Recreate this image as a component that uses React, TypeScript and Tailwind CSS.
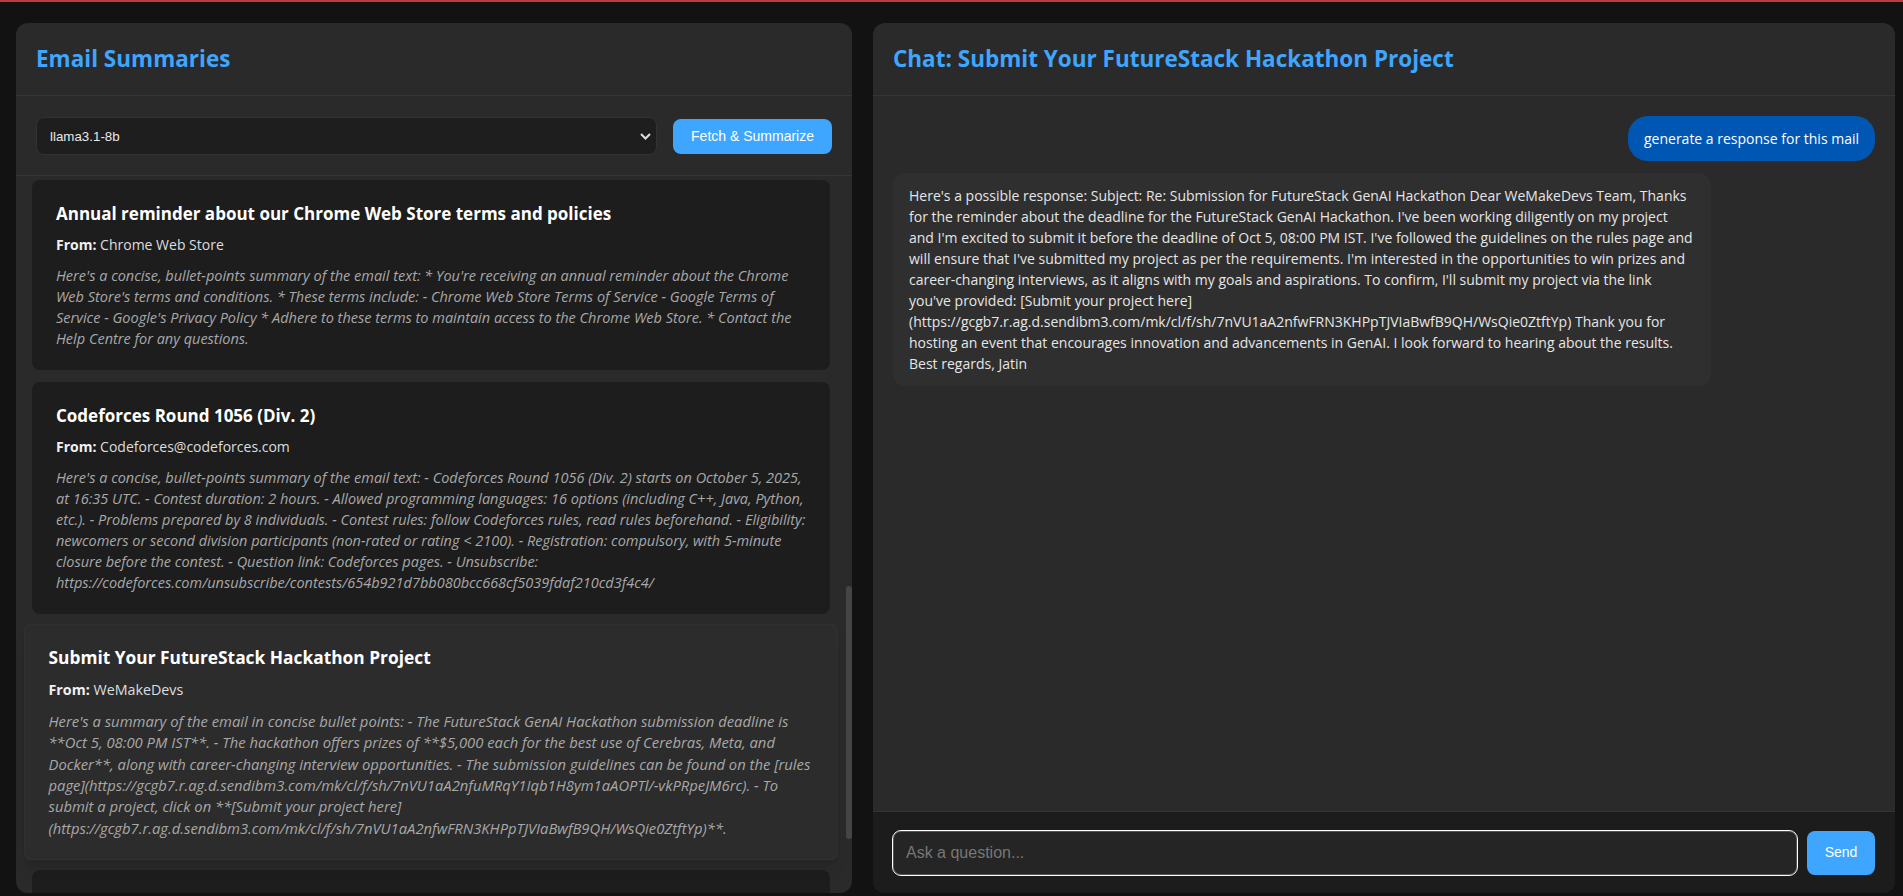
import { useLayoutEffect, useRef, useState } from 'react';

interface Email {
    id: number;
    subject: string;
    from: string;
    summary: string;
}

interface Message {
    role: 'user' | 'assistant';
    text: string;
}

const emails: Email[] = [
    {
        id: 1,
        subject: 'Your weekly GitHub digest',
        from: 'GitHub',
        summary:
            "Here's a concise, bullet-points summary of the email text: - 3 repositories you follow published new releases this week. - Your pull request on react-router received 2 reviews. - New security advisories were published for 1 of your dependencies. - Manage notification settings from your account page. - Trending repositories in TypeScript and Python are listed at the end of the digest, along with suggested discussions you might want to join.",
    },
    {
        id: 2,
        subject: 'LeetCode Weekly Contest 469',
        from: 'LeetCode',
        summary:
            "Here's a concise, bullet-points summary of the email text: - Weekly Contest 469 starts on Sunday at 8:00 AM IST. - Contest duration: 90 minutes, 4 problems. - Top 500 participants earn LeetCoins. - Register before the contest begins to be eligible for rankings.",
    },
    {
        id: 3,
        subject: 'Security alert for your linked Google Account',
        from: 'Google',
        summary:
            "Here's a concise, bullet-points summary of the email text: * A new sign-in was detected on a Windows device. * If this was you, no action is needed. * If not, review your account activity and change your password.",
    },
    {
        id: 4,
        subject: 'Your application has been shortlisted',
        from: 'Internshala',
        summary:
            "Here's a concise, bullet-points summary of the email text: - Your application for the Frontend Developer internship has been shortlisted. - The company will contact you for the next round within 3 working days. - Keep your profile and resume updated. - Check the dashboard for assignment details and deadlines.",
    },
    {
        id: 5,
        subject: 'Welcome to the Google Developer Program',
        from: 'Google Developers',
        summary:
            "Here's a concise, bullet-points summary of the email text: - Your Google Developer Program profile is now active. - Earn badges by completing codelabs and attending events. - Explore new learning pathways for Android, Firebase and Gemini. - Join a local Google Developer Group to connect with other developers.",
    },
    {
        id: 10,
        subject: 'Your Cerebras API key is ready',
        from: 'Cerebras',
        summary:
            "Here's a concise, bullet-points summary of the email text: - Your Cerebras Inference API key has been generated and is available in the developer console. - The free tier includes access to llama3.1-8b, llama-3.3-70b and qwen-3-32b models. - Rate limits: 30 requests per minute and 60,000 tokens per minute on the free tier. - The API is compatible with the OpenAI client libraries, so existing code only needs a new base URL. - Keep your key secret and rotate it from the console if it is exposed. - Read the quickstart guide for examples in Python and Node.js. - Join the community Discord for support and announcements.",
    },
    {
        id: 6,
        subject: 'Annual reminder about our Chrome Web Store terms and policies',
        from: 'Chrome Web Store',
        summary:
            "Here's a concise, bullet-points summary of the email text: * You're receiving an annual reminder about the Chrome Web Store's terms and conditions. * These terms include: - Chrome Web Store Terms of Service - Google Terms of Service - Google's Privacy Policy * Adhere to these terms to maintain access to the Chrome Web Store. * Contact the Help Centre for any questions.",
    },
    {
        id: 7,
        subject: 'Codeforces Round 1056 (Div. 2)',
        from: 'Codeforces@codeforces.com',
        summary:
            "Here's a concise, bullet-points summary of the email text: - Codeforces Round 1056 (Div. 2) starts on October 5, 2025, at 16:35 UTC. - Contest duration: 2 hours. - Allowed programming languages: 16 options (including C++, Java, Python, etc.). - Problems prepared by 8 individuals. - Contest rules: follow Codeforces rules, read rules beforehand. - Eligibility: newcomers or second division participants (non-rated or rating < 2100). - Registration: compulsory, with 5-minute closure before the contest. - Question link: Codeforces pages. - Unsubscribe: https://codeforces.com/unsubscribe/contests/654b921d7bb080bcc668cf5039fdaf210cd3f4c4/",
    },
    {
        id: 8,
        subject: 'Submit Your FutureStack Hackathon Project',
        from: 'WeMakeDevs',
        summary:
            "Here's a summary of the email in concise bullet points: - The FutureStack GenAI Hackathon submission deadline is **Oct 5, 08:00 PM IST**. - The hackathon offers prizes of **$5,000 each for the best use of Cerebras, Meta, and Docker**, along with career-changing interview opportunities. - The submission guidelines can be found on the [rules page](https://gcgb7.r.ag.d.sendibm3.com/mk/cl/f/sh/7nVU1aA2nfuMRqY1Iqb1H8ym1aAOPTl/-vkPRpeJM6rc). - To submit a project, click on **[Submit your project here](https://gcgb7.r.ag.d.sendibm3.com/mk/cl/f/sh/7nVU1aA2nfwFRN3KHPpTJVIaBwfB9QH/WsQie0ZtftYp)**.",
    },
    {
        id: 9,
        subject: 'Your October statement is ready',
        from: 'HDFC Bank',
        summary:
            "Here's a concise, bullet-points summary of the email text: - Your credit card statement for October is now available. - Pay before the due date to avoid late charges.",
    },
];

const messages: Message[] = [
    { role: 'user', text: 'generate a response for this mail' },
    {
        role: 'assistant',
        text: "Here's a possible response: Subject: Re: Submission for FutureStack GenAI Hackathon Dear WeMakeDevs Team, Thanks for the reminder about the deadline for the FutureStack GenAI Hackathon. I've been working diligently on my project and I'm excited to submit it before the deadline of Oct 5, 08:00 PM IST. I've followed the guidelines on the rules page and will ensure that I've submitted my project as per the requirements. I'm interested in the opportunities to win prizes and career-changing interviews, as it aligns with my goals and aspirations. To confirm, I'll submit my project via the link you've provided: [Submit your project here](https://gcgb7.r.ag.d.sendibm3.com/mk/cl/f/sh/7nVU1aA2nfwFRN3KHPpTJVIaBwfB9QH/WsQie0ZtftYp) Thank you for hosting an event that encourages innovation and advancements in GenAI. I look forward to hearing about the results. Best regards, Jatin",
    },
];

export default function App() {
    const [model, setModel] = useState('llama3.1-8b');
    const [selectedId, setSelectedId] = useState(8);
    const [question, setQuestion] = useState('');
    const [thumb, setThumb] = useState({ top: 0, height: 0 });
    const listRef = useRef<HTMLDivElement>(null);
    const firstVisibleRef = useRef<HTMLDivElement>(null);

    const updateThumb = () => {
        const el = listRef.current;
        if (!el) return;
        const h = el.clientHeight;
        const total = el.scrollHeight;
        setThumb({ top: (el.scrollTop / total) * h, height: (h * h) / total });
    };

    // list is scrolled down to the Chrome Web Store mail
    useLayoutEffect(() => {
        if (listRef.current && firstVisibleRef.current) {
            listRef.current.scrollTop = firstVisibleRef.current.offsetTop - 4;
        }
        updateThumb();
    }, []);

    const selected = emails.find((e) => e.id === selectedId);

    return (
        <div className="h-[896px] overflow-hidden bg-[#121212] font-['Open_Sans',sans-serif] text-[14px] leading-[21px] text-[#e0e0e0]">
            <div className="h-[2px] bg-[#c23a3c]" />

            <div className="flex gap-[21px] pl-4 pt-[21px]">
                {/* left: summaries */}
                <section className="flex h-[870px] w-[836px] flex-col overflow-hidden rounded-xl bg-[#2a2a2a]">
                    <header className="border-b border-[#363636] px-5 py-5">
                        <h1 className="text-[22.5px] font-bold leading-8 text-[#3ea6ff]">Email Summaries</h1>
                    </header>

                    <div className="flex items-center gap-4 border-b border-[#363636] px-5 pb-5 pt-[21px]">
                        <div className="relative flex-1">
                            <select
                                value={model}
                                onChange={(e) => setModel(e.target.value)}
                                className="h-[38px] w-full appearance-none rounded-lg border border-[#333] bg-[#1e1e1e] pl-[13px] font-['Liberation_Sans',Arial,sans-serif] text-[13.33px] text-[#e8e8e8] outline-none"
                            >
                                <option value="llama3.1-8b">llama3.1-8b</option>
                                <option value="llama-3.3-70b">llama-3.3-70b</option>
                                <option value="qwen-3-32b">qwen-3-32b</option>
                            </select>
                            <svg
                                className="pointer-events-none absolute right-[6px] top-[16px] h-[7px] w-[11px] text-[#e0e0e0]"
                                viewBox="0 0 11 7"
                                fill="none"
                                stroke="currentColor"
                                strokeWidth="2"
                            >
                                <path d="M1 1l4.5 4.5L10 1" />
                            </svg>
                        </div>
                        <button className="h-[35px] cursor-pointer rounded-lg bg-[#3ea6ff] px-[18px] font-['Liberation_Sans',Arial,sans-serif] text-[14px] text-white">
                            Fetch &amp; Summarize
                        </button>
                    </div>

                    <div className="relative min-h-0 flex-1">
                        <div
                            ref={listRef}
                            onScroll={updateThumb}
                            className="relative h-full overflow-y-auto py-4 pl-4 pr-[22px] [scrollbar-width:none]"
                        >
                            {emails.map((email) => {
                                const isSelected = email.id === selectedId;
                                return (
                                    <div
                                        key={email.id}
                                        ref={email.id === 6 ? firstVisibleRef : undefined}
                                        onClick={() => setSelectedId(email.id)}
                                        className={
                                            isSelected
                                                ? 'mb-3 scale-[1.02] cursor-pointer rounded-lg border border-[#323232] bg-[#2c2c2c] py-5 pl-[23px] pr-5 shadow-lg'
                                                : 'mb-3 cursor-pointer rounded-lg border border-transparent bg-[#1d1d1d] py-5 pl-[23px] pr-5'
                                        }
                                    >
                                        <h3 className="mb-2 text-[17px] font-bold leading-[25px] text-white">{email.subject}</h3>
                                        <p className="mb-2.5 text-[#dedede]">
                                            <span className="font-bold text-[#f0f0f0]">From:</span> {email.from}
                                        </p>
                                        <p className="text-[14.5px] italic text-[#a8a8a8]">{email.summary}</p>
                                    </div>
                                );
                            })}
                        </div>
                        {/* scrollbar thumb */}
                        <div
                            className="pointer-events-none absolute right-0 w-1.5 rounded-full bg-[#454545]"
                            style={{ top: thumb.top, height: thumb.height }}
                        />
                    </div>
                </section>

                {/* right: chat */}
                <section className="flex h-[870px] w-[1022px] flex-col overflow-hidden rounded-xl bg-[#2a2a2a]">
                    <header className="border-b border-[#363636] px-5 py-5">
                        <h2 className="text-[22.5px] font-bold leading-8 text-[#3ea6ff]">Chat: {selected?.subject}</h2>
                    </header>

                    <div className="flex flex-1 flex-col gap-3 overflow-y-auto px-5 pt-5">
                        {messages.map((m, i) =>
                            m.role === 'user' ? (
                                <div key={i} className="self-end rounded-[20px] bg-[#0056b3] px-4 py-3 text-white">
                                    {m.text}
                                </div>
                            ) : (
                                <div key={i} className="max-w-[818px] self-start rounded-xl bg-[#2f2f2f] px-4 py-3 text-[#e6e6e6]">
                                    {m.text}
                                </div>
                            )
                        )}
                    </div>

                    <div className="flex h-[82px] items-center gap-2.5 border-t border-[#333] bg-[#1c1c1c] px-5">
                        <input
                            value={question}
                            onChange={(e) => setQuestion(e.target.value)}
                            placeholder="Ask a question..."
                            className="h-[44px] flex-1 rounded-lg border border-[#555] bg-[#252525] px-3 font-['Liberation_Sans',Arial,sans-serif] text-[16px] text-[#e0e0e0] outline outline-1 outline-white placeholder:text-[#777]"
                        />
                        <button className="h-[44px] w-[68px] cursor-pointer rounded-lg bg-[#3ea6ff] font-['Liberation_Sans',Arial,sans-serif] text-[14px] text-white">
                            Send
                        </button>
                    </div>
                </section>
            </div>
        </div>
    );
}
